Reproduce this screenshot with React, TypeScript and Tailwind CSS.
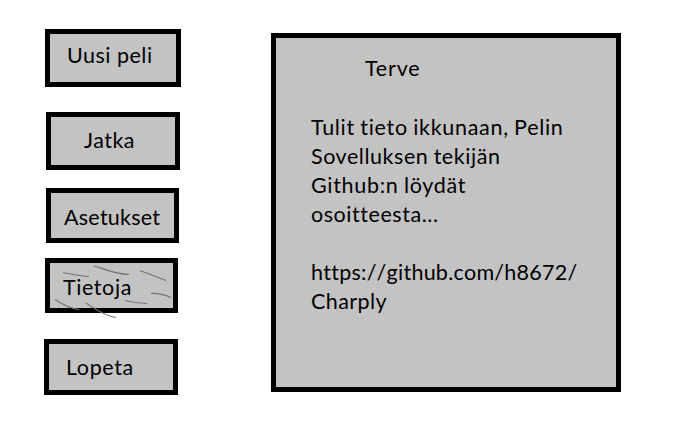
import React from "react";

function MenuButton({
  box,
  text,
  label,
  children,
}: {
  box: string;
  text: string;
  label: string;
  children?: React.ReactNode;
}) {
  return (
    <button
      className={`relative flex shrink-0 items-start border-[5px] border-black bg-[#c3c3c3] text-left leading-[29px] whitespace-nowrap ${box}`}
    >
      <span className={`block ${text}`}>{label}</span>
      {children}
    </button>
  );
}

function Scribbles() {
  return (
    <svg
      className="absolute -top-[5px] -left-[5px] overflow-visible"
      width="133"
      height="62"
      fill="none"
      stroke="#727272"
      strokeWidth="1.15"
    >
      <path d="M18 14.5 C26 16 34 18 44 18.5" />
      <path d="M49 8 C58 10 68 16 84 16.5" />
      <path d="M95 12.5 L104 16 L112 19 L121 22.5" />
      <path d="M106 35.5 C113 35 120 37 126 39.5" />
      <path d="M80 42.5 L90 44.5 L102 45.5" />
      <path d="M10 41.5 C17 46 26 51 34 51.5" />
      <path d="M41 45 C49 50 59 58 71 59.5" />
    </svg>
  );
}

export default function App() {
  return (
    <main className="flex h-[433px] w-[693px] items-start overflow-hidden bg-white font-['Lato','Open_Sans',sans-serif] text-[21.5px] text-black">
      <nav className="flex w-[271px] flex-col items-start pt-[29px]">
        <MenuButton label="Uusi peli" box="ml-[45px] h-[58px] w-[136px]" text="pt-[7px] pl-[17px] tracking-[0.5px]" />
        <MenuButton label="Jatka" box="mt-[25px] ml-[46px] h-[58px] w-[134px]" text="pt-[9px] pl-[33px] tracking-[0.5px]" />
        <MenuButton label="Asetukset" box="mt-[18px] ml-[46px] h-[55px] w-[133px]" text="pt-[10px] pl-[13px] tracking-[0.25px]" />
        <MenuButton label="Tietoja" box="mt-[15px] ml-[45px] h-[55px] w-[133px]" text="pt-[10px] pl-[13px] tracking-[0.6px]">
          <Scribbles />
        </MenuButton>
        <MenuButton label="Lopeta" box="mt-[26px] ml-[44px] h-[56px] w-[134px]" text="pt-[9px] pl-[17px] tracking-[0.6px]" />
      </nav>
      <section className="mt-[33px] h-[359px] w-[350px] border-[5px] border-black bg-[#c3c3c3] pt-[16px] pl-[35px] leading-[29px] whitespace-nowrap">
        <h1 className="pl-[54px] tracking-[0.8px]">Terve</h1>
        <div className="mt-[30px]">
          <p className="tracking-[0.7px] [word-spacing:-0.8px]">Tulit tieto ikkunaan, Pelin</p>
          <p className="tracking-[0.55px] [word-spacing:-0.8px]">Sovelluksen tekijän</p>
          <p className="tracking-[0.7px] [word-spacing:-0.8px]">Github:n löydät</p>
          <p className="tracking-[0.55px]">osoitteesta...</p>
        </div>
        <div className="mt-[29px]">
          <p className="tracking-[0.25px] [font-kerning:none]">https://github.com/h8672/</p>
          <p className="tracking-[0.4px]">Charply</p>
        </div>
      </section>
    </main>
  );
}
